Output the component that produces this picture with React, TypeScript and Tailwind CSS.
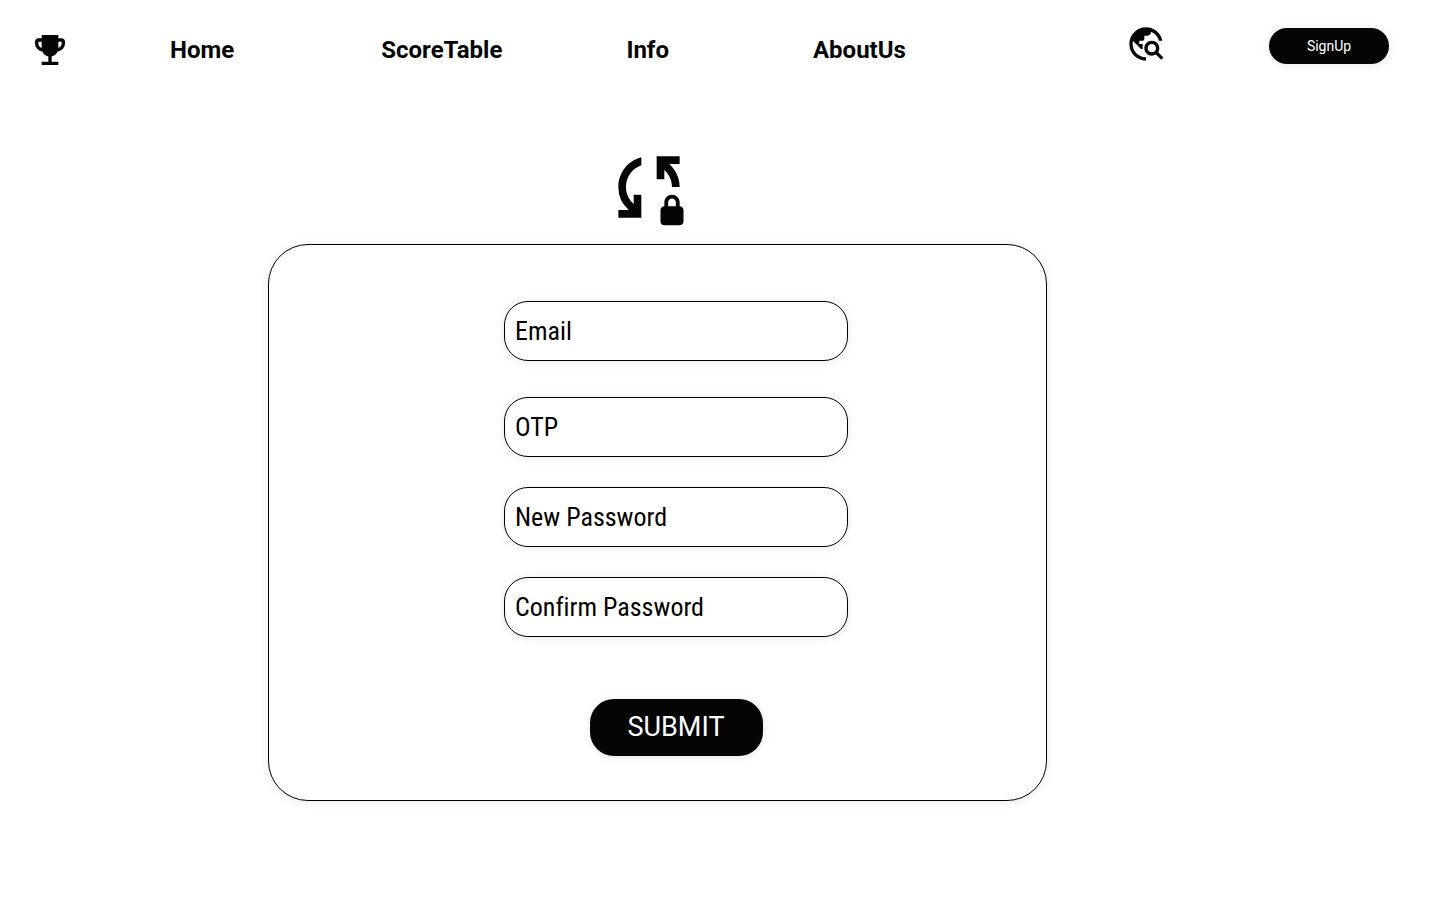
import React from "react";
import { MdEmojiEvents, MdSyncLock, MdTravelExplore } from "react-icons/md";

const shadow = "shadow-[0_1px_8px_rgba(0,0,0,0.1)]";

function Header() {
  return (
    <header className="flex items-start pt-6 pr-[51px] pl-[30px]">
      <a href="#" aria-label="Trophies" className="pt-1.5">
        <MdEmojiEvents className="size-10" />
      </a>
      <nav className="ml-[100px] flex pt-[10px] text-2xl font-bold">
        <a href="#home" className="mr-[147px]">Home</a>
        <a href="#scores" className="mr-[124px]">ScoreTable</a>
        <a href="#info" className="mr-[144px]">Info</a>
        <a href="#about">AboutUs</a>
      </nav>
      <button type="button" aria-label="Explore" className="mr-[103px] ml-auto">
        <MdTravelExplore className="size-10" />
      </button>
      <button
        type="button"
        className={`mt-1 h-9 w-[120px] rounded-full bg-[#050505] text-sm text-white ${shadow}`}
      >
        SignUp
      </button>
    </header>
  );
}

function Field({ label, type }: { label: string; type: string }) {
  return (
    <input
      type={type}
      aria-label={label}
      placeholder={label}
      className={`h-[60px] w-full rounded-[24px] border border-black bg-white px-[10px] font-['Roboto_Condensed','Liberation_Sans_Narrow',Roboto,sans-serif] text-[26px] text-black [font-variant-ligatures:none] placeholder:text-black placeholder:opacity-100 ${shadow}`}
    />
  );
}

export default function App() {
  return (
    <div className="min-h-screen bg-white font-[Roboto,sans-serif] text-[#050505]">
      <Header />
      <main className="ml-[268px] flex max-w-[779px] flex-col pt-[71px]">
        <MdSyncLock className="ml-[335px] size-[92px]" />
        <form
          className={`mt-[11px] rounded-[40px] border border-black bg-white pt-14 pb-11 pl-[235px] ${shadow}`}
          onSubmit={(e) => e.preventDefault()}
        >
          <div className="flex w-[344px] flex-col">
            <Field label="Email" type="email" />
            <div className="mt-9 flex flex-col gap-[30px]">
              <Field label="OTP" type="text" />
              <Field label="New Password" type="password" />
              <Field label="Confirm Password" type="password" />
            </div>
            <button
              type="submit"
              className={`mt-[62px] h-[57px] w-[173px] self-center rounded-[24px] bg-[#050505] text-[27px] text-white ${shadow}`}
            >
              SUBMIT
            </button>
          </div>
        </form>
      </main>
    </div>
  );
}
